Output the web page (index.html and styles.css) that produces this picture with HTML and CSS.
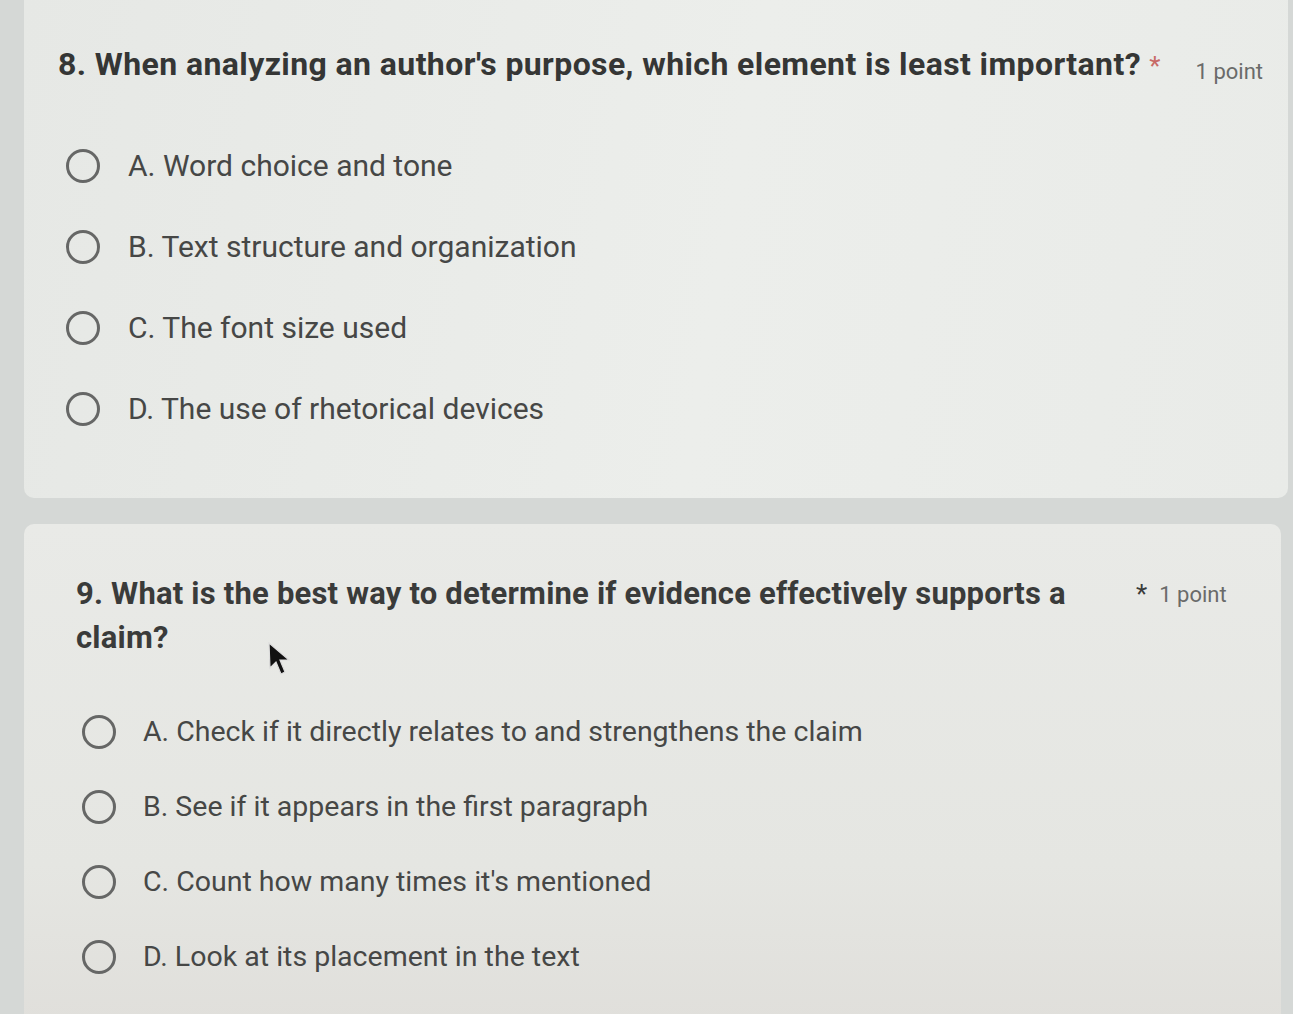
FILE: index.html
```html
<!DOCTYPE html>
<html lang="en">
<head>
    <meta charset="UTF-8">
    <title>Quiz</title>
    <link rel="stylesheet" href="styles.css">
</head>
<body>
<div class="page">
    <div class="card card-8">
        <div class="head">
            <p class="title">8. When analyzing an author's purpose, which element is least important? <span class="star">*</span></p>
            <span class="points">1 point</span>
        </div>
        <ul class="options">
            <li><span class="radio"></span>A. Word choice and tone</li>
            <li><span class="radio"></span>B. Text structure and organization</li>
            <li><span class="radio"></span>C. The font size used</li>
            <li><span class="radio"></span>D. The use of rhetorical devices</li>
        </ul>
    </div>
    <div class="card card-9">
        <div class="head">
            <p class="title">9. What is the best way to determine if evidence effectively supports a claim?</p>
            <span class="star">*</span>
            <span class="points">1 point</span>
        </div>
        <ul class="options">
            <li><span class="radio"></span>A. Check if it directly relates to and strengthens the claim</li>
            <li><span class="radio"></span>B. See if it appears in the first paragraph</li>
            <li><span class="radio"></span>C. Count how many times it's mentioned</li>
            <li><span class="radio"></span>D. Look at its placement in the text</li>
        </ul>
        <svg class="cursor" width="26" height="36" viewBox="0 0 26 36">
            <path d="M2 1 L3 26 L9 20 L14 32 L18 30 L13 18 L22 18 Z" fill="#111" stroke="#ddd" stroke-width="1.2"/>
        </svg>
    </div>
</div>
</body>
</html>
```

FILE: styles.css
```css
*{
    margin: 0;
    padding: 0;
}
body{
    background: #d5d8d6;
    font-family: Roboto, "Liberation Sans", Arial, sans-serif;
    color: #3b3c3b;
    overflow: hidden;
}
.page{
    padding-left: 24px;
}
.card{
    background: linear-gradient(100deg, #e6e8e5 0%, #eceeeb 55%, #e9ebe8 100%);
    border-radius: 0 0 10px 10px;
}
.card-8{
    height: 498px;
    box-sizing: border-box;
    margin-right: 5px;
    padding: 44px 25px 0 34px;
}
.card-9{
    position: relative;
    margin-top: 26px;
    margin-right: 12px;
    height: 520px;
    border-radius: 10px 10px 0 0;
    padding: 48px 48px 0 52px;
    background: linear-gradient(180deg, #e9eae7 0%, #e5e6e2 60%, #dedcd8 100%);
}
.head{
    display: flex;
    align-items: flex-start;
}
.title{
    font-size: 32px;
    font-weight: bold;
    line-height: 40px;
    color: #353635;
    letter-spacing: 0.4px;
}
.card-8 .title{
    flex: 1;
}
.card-9 .title{
    width: 1000px;
    font-size: 31px;
    letter-spacing: 0.2px;
    line-height: 44px;
    color: #3a3b3a;
}
.star{
    color: #c86a66;
    font-weight: normal;
    font-size: 26px;
}
.card-9 .star{
    margin-left: 60px;
    line-height: 44px;
    color: #3a3b3a;
}
.points{
    font-size: 22px;
    color: #6a6b6a;
    line-height: 40px;
    margin-top: 8px;
    white-space: nowrap;
}
.card-9 .points{
    margin-left: 12px;
    margin-top: 3px;
}
.options{
    list-style: none;
}
.card-8 .options{
    margin-top: 33px;
    padding-left: 8px;
}
.card-9 .options{
    margin-top: 34px;
    padding-left: 6px;
}
.options li{
    display: flex;
    align-items: center;
    height: 81px;
    font-size: 30px;
    color: #464746;
}
.card-9 .options li{
    height: 75px;
    font-size: 28.5px;
}
.radio{
    width: 28px;
    height: 28px;
    border: 3px solid #666766;
    border-radius: 50%;
    margin-right: 28px;
    flex-shrink: 0;
}
.card-9 .radio{
    margin-right: 27px;
}
.cursor{
    position: absolute;
    left: 243px;
    top: 118px;
}
```
